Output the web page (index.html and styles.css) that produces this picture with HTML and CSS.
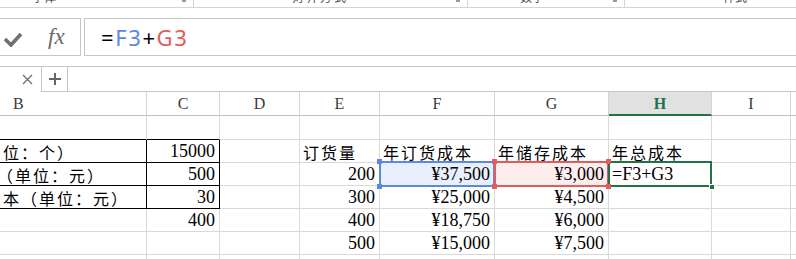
FILE: index.html
```html
<!DOCTYPE html>
<html lang="zh-CN">
<head>
    <meta charset="UTF-8">
    <title>经济订货量</title>
    <link rel="stylesheet" href="styles.css">
</head>
<body>
    <div class="ribbon">
        <div class="group g1"><span class="group-label">字体</span><span class="launcher"></span></div>
        <div class="group g2"><span class="group-label">对齐方式</span><span class="launcher"></span></div>
        <div class="group g3"><span class="group-label">数字</span><span class="launcher"></span></div>
        <div class="group g4"><span class="group-label">样式</span></div>
    </div>

    <div class="formula-bar">
        <div class="fb-buttons">
            <svg class="icon-check" width="20" height="16" viewBox="0 0 20 16">
                <polyline points="2,8 8,14 18,3" fill="none" stroke="#707070" stroke-width="3.6"/>
            </svg>
            <span class="fx">fx</span>
        </div>
        <div class="fb-input">
            <span>=</span><span class="ref-blue">F3</span><span>+</span><span class="ref-red">G3</span>
        </div>
    </div>

    <div class="tabbar">
        <div class="tab-close">
            <svg width="11" height="11" viewBox="0 0 11 11">
                <path d="M1 1L10 10M10 1L1 10" stroke="#6a6a6a" stroke-width="1.2"/>
            </svg>
        </div>
        <div class="tab-add">
            <svg width="12" height="12" viewBox="0 0 12 12">
                <path d="M6 0V12M0 6H12" stroke="#666" stroke-width="2"/>
            </svg>
        </div>
        <div class="tab-rest"></div>
    </div>

    <div class="sheet">
        <!-- column headers -->
        <div class="hd hd-b">B</div>
        <div class="hd">C</div>
        <div class="hd">D</div>
        <div class="hd">E</div>
        <div class="hd">F</div>
        <div class="hd">G</div>
        <div class="hd hd-active">H</div>
        <div class="hd">I</div>
        <div class="hd"></div>

        <!-- row 1 -->
        <div class="cell bb"></div>
        <div class="cell bb"></div>
        <div class="cell"></div>
        <div class="cell"></div>
        <div class="cell"></div>
        <div class="cell"></div>
        <div class="cell"></div>
        <div class="cell"></div>
        <div class="cell"></div>

        <!-- row 2 -->
        <div class="cell box cn">位：个）</div>
        <div class="cell box num">15000</div>
        <div class="cell"></div>
        <div class="cell cn">订货量</div>
        <div class="cell cn">年订货成本</div>
        <div class="cell cn">年储存成本</div>
        <div class="cell cn">年总成本</div>
        <div class="cell"></div>
        <div class="cell"></div>

        <!-- row 3 -->
        <div class="cell box cn shift">（单位：元）</div>
        <div class="cell box num">500</div>
        <div class="cell"></div>
        <div class="cell num">200</div>
        <div class="cell num sel sel-blue">¥37,500
            <span class="h tl"></span><span class="h tr"></span><span class="h bl"></span><span class="h br"></span>
        </div>
        <div class="cell num sel sel-red">¥3,000
            <span class="h tl"></span><span class="h tr"></span><span class="h bl"></span><span class="h br"></span>
        </div>
        <div class="cell active">=F3+G3<span class="fill-handle"></span></div>
        <div class="cell"></div>
        <div class="cell"></div>

        <!-- row 4 -->
        <div class="cell box cn">本（单位：元）</div>
        <div class="cell box num">30</div>
        <div class="cell"></div>
        <div class="cell num">300</div>
        <div class="cell num">¥25,000</div>
        <div class="cell num">¥4,500</div>
        <div class="cell"></div>
        <div class="cell"></div>
        <div class="cell"></div>

        <!-- row 5 -->
        <div class="cell"></div>
        <div class="cell num">400</div>
        <div class="cell"></div>
        <div class="cell num">400</div>
        <div class="cell num">¥18,750</div>
        <div class="cell num">¥6,000</div>
        <div class="cell"></div>
        <div class="cell"></div>
        <div class="cell"></div>

        <!-- row 6 -->
        <div class="cell"></div>
        <div class="cell"></div>
        <div class="cell"></div>
        <div class="cell num">500</div>
        <div class="cell num">¥15,000</div>
        <div class="cell num">¥7,500</div>
        <div class="cell"></div>
        <div class="cell"></div>
        <div class="cell"></div>

        <!-- row 7 -->
        <div class="cell"></div>
        <div class="cell"></div>
        <div class="cell"></div>
        <div class="cell"></div>
        <div class="cell"></div>
        <div class="cell"></div>
        <div class="cell"></div>
        <div class="cell"></div>
        <div class="cell"></div>
    </div>
</body>
</html>
```

FILE: styles.css
```css
* {
    box-sizing: border-box;
}
body {
    margin: 0;
    width: 796px;
    height: 259px;
    overflow: hidden;
    background: #fff;
    font-family: "Liberation Serif", "Noto Sans CJK SC", serif;
}

/* ribbon remnant */
.ribbon {
    display: flex;
    height: 8px;
    border-bottom: 1px solid #d4d4d4;
    overflow: hidden;
}
.group {
    display: flex;
    align-items: flex-end;
    height: 7px;
    border-right: 1px solid #d4d4d4;
}
.g1 { width: 194px; }
.g2 { width: 274px; }
.g3 { width: 157px; }
.g4 { flex: 1; border-right: none; }
.group-label {
    font-family: "Noto Sans CJK SC", sans-serif;
    font-size: 12px;
    line-height: 12px;
    color: #555;
    margin-bottom: 4px;
}
.g1 .group-label { margin-left: 32px; }
.g2 .group-label { margin-left: 98px; letter-spacing: 2px; }
.g3 .group-label { margin-left: 52px; }
.g4 .group-label { margin-left: 98px; }
.launcher {
    align-self: flex-start;
    width: 4px;
    height: 2px;
    margin-left: auto;
    margin-right: 7px;
    background: #9a9a9a;
}

/* formula bar */
.formula-bar {
    display: flex;
    height: 38px;
    margin-top: 10px;
}
.fb-buttons {
    display: flex;
    align-items: center;
    width: 81px;
    padding-left: 3px;
    border-top: 1px solid #c6c6c6;
    border-bottom: 1px solid #c6c6c6;
    border-right: 1px solid #c6c6c6;
}
.icon-check {
    margin-top: 3px;
}
.fx {
    margin-left: 25px;
    font-family: "Liberation Serif", serif;
    font-style: italic;
    font-size: 23px;
    color: #6a6a6a;
}
.fb-input {
    flex: 1;
    display: flex;
    align-items: center;
    margin-left: 3px;
    padding-left: 16px;
    border: 1px solid #c6c6c6;
    border-right: none;
    font-family: "Noto Sans", sans-serif;
    font-size: 22px;
    letter-spacing: 1.6px;
    color: #000;
}
.ref-blue { color: #5b87e6; }
.ref-red { color: #e35c5c; }

/* sheet tabs */
.tabbar {
    display: flex;
    height: 26px;
    margin-top: 10px;
    border-top: 1px solid #c6c6c6;
}
.tab-close {
    width: 41px;
    display: flex;
    align-items: center;
    justify-content: flex-end;
    padding-right: 8px;
}
.tab-add {
    width: 27px;
    display: flex;
    align-items: center;
    justify-content: center;
    border-left: 1px solid #c6c6c6;
    border-right: 1px solid #c6c6c6;
    border-bottom: 1px solid #c6c6c6;
}
.tab-rest {
    flex: 1;
    border-bottom: 1px solid #c6c6c6;
}

/* grid */
.sheet {
    display: grid;
    grid-template-columns: 147px 73px 80px 80px 115px 114px 103px 79px 40px;
    grid-template-rows: 24px 24px repeat(6, 23px);
}
.hd {
    display: flex;
    align-items: center;
    justify-content: center;
    border-right: 1px solid #d5d5d5;
    border-bottom: 1px solid #c0c0c0;
    font-size: 16px;
    color: #3a3a3a;
    padding-top: 1px;
}
.hd-b {
    justify-content: flex-start;
    padding-left: 13px;
}
.hd-active {
    background: #e1e1e1;
    color: #217346;
    font-weight: bold;
    border-bottom: 2px solid #217346;
}
.cell {
    position: relative;
    display: flex;
    align-items: center;
    padding: 1px 3px 0;
    border-right: 1px solid #d9d9d9;
    border-bottom: 1px solid #d9d9d9;
    font-size: 18px;
    white-space: nowrap;
    overflow: visible;
    color: #000;
}
.cn {
    font-family: "Noto Sans CJK SC", sans-serif;
    font-size: 16px;
    letter-spacing: 2px;
    padding-left: 3px;
}
.shift {
    padding-left: 0;
    margin-left: -3px;
}
.num {
    justify-content: flex-end;
    padding-right: 4px;
}
.bb {
    border-bottom-color: #000;
}
.box {
    border-right-color: #000;
    border-bottom-color: #000;
}

/* reference highlights */
.sel-blue {
    --sel: #5b87e6;
    background: #e9effc;
}
.sel-red {
    --sel: #e35c5c;
    background: #fdeded;
}
.sel::after {
    content: "";
    position: absolute;
    top: -2px;
    left: -1px;
    right: -1px;
    bottom: -2px;
    border: 2px solid var(--sel);
}
.h {
    position: absolute;
    width: 5px;
    height: 5px;
    background: var(--sel);
    z-index: 2;
}
.h.tl { top: -4px; left: -3px; }
.h.tr { top: -4px; right: -3px; }
.h.bl { bottom: -4px; left: -3px; }
.h.br { bottom: -4px; right: -3px; }
.active::after {
    content: "";
    position: absolute;
    top: -2px;
    left: -1px;
    right: -1px;
    bottom: -2px;
    border: 2px solid #217346;
}
.fill-handle {
    position: absolute;
    right: -4px;
    bottom: -5px;
    width: 6px;
    height: 6px;
    background: #217346;
    border: 1px solid #fff;
    z-index: 3;
}
```
